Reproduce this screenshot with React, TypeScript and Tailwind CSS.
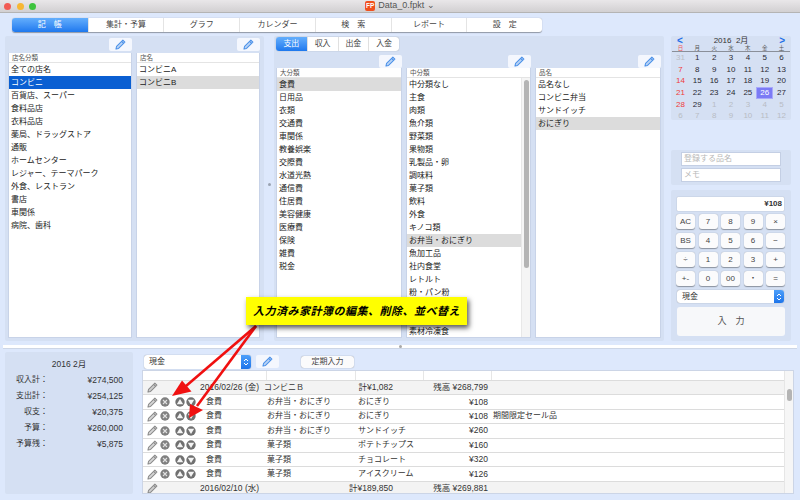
import React from 'react';

const shopGroups = ['全ての店名', 'コンビニ', '百貨店、スーパー', '食料品店', '衣料品店', '薬局、ドラッグストア', '通販', 'ホームセンター', 'レジャー、テーマパーク', '外食、レストラン', '書店', '車関係', '病院、歯科'];
const shops = ['コンビニA', 'コンビニB'];
const majors = ['食費', '日用品', '衣類', '交通費', '車関係', '教養娯楽', '交際費', '水道光熱', '通信費', '住居費', '美容健康', '医療費', '保険', '雑費', '税金'];
// two rows sit under the yellow note and can't be read
const middles = ['中分類なし', '主食', '肉類', '魚介類', '野菜類', '果物類', '乳製品・卵', '調味料', '菓子類', '飲料', '外食', 'キノコ類', 'お弁当・おにぎり', '魚加工品', '社内食堂', 'レトルト', '粉・パン粉', '', '', '素材冷凍食'];
const items = ['品名なし', 'コンビニ弁当', 'サンドイッチ', 'おにぎり'];
const tabs = ['記　帳', '集計・予算', 'グラフ', 'カレンダー', '検　索', 'レポート', '設　定'];
const days = ['日', '月', '火', '水', '木', '金', '土'];
const calc = ['AC', '7', '8', '9', '×', 'BS', '4', '5', '6', '−', '÷', '1', '2', '3', '+', '+-', '0', '00', '・', '='];
const summary = [['収入計：', '¥274,500'], ['支出計：', '¥254,125'], ['収支：', '¥20,375'], ['予算：', '¥260,000'], ['予算残：', '¥5,875']];
const entries = [
  ['食費', 'お弁当・おにぎり', 'おにぎり', '¥108', ''],
  ['食費', 'お弁当・おにぎり', 'おにぎり', '¥108', '期間限定セール品'],
  ['食費', 'お弁当・おにぎり', 'サンドイッチ', '¥260', ''],
  ['食費', '菓子類', 'ポテトチップス', '¥160', ''],
  ['食費', '菓子類', 'チョコレート', '¥320', ''],
  ['食費', '菓子類', 'アイスクリーム', '¥126', ''],
];

function PencilIcon({ color = '#4a90e8' }: { color?: string }) {
  return (
    <svg width="11" height="11" viewBox="0 0 12 12" fill="none" stroke={color} strokeWidth="1.1" strokeLinejoin="round">
      <path d="M8.6 1.2l2.2 2.2-6.9 6.9-2.9.7.7-2.9z" fill={color} fillOpacity="0.35" />
      <path d="M7.2 2.6l2.2 2.2" />
    </svg>
  );
}

function PencilButton() {
  return (
    <div className="w-[23px] h-[13px] bg-[#f4f7fe] rounded-[2px] flex items-center justify-center">
      <PencilIcon />
    </div>
  );
}

function ListBox({ title, rows, selected, selectedClass = 'bg-[#dcdcdc] text-[#222]', scroll = false }: { title: string; rows: string[]; selected: number; selectedClass?: string; scroll?: boolean }) {
  return (
    <div className="flex-1 flex flex-col bg-white border-x border-b border-[#c8d3e8] min-h-0 overflow-hidden">
      <div className="h-[10px] flex items-center pl-[3px] text-[6.5px] text-[#555] border-b border-[#e4e4e4] shrink-0">{title}</div>
      <div className="flex-1 flex min-h-0">
        <div className="flex-1 overflow-hidden">
          {rows.map((row, i) => (
            <div key={i} className={`h-[13px] flex items-center pl-[2px] text-[8px] ${i === selected ? selectedClass : 'text-[#222]'}`}>
              {row}
            </div>
          ))}
        </div>
        {scroll && (
          <div className="w-[9px] bg-[#f5f5f5] border-l border-[#e8e8e8] pt-[2px] flex justify-center">
            <div className="w-[5px] h-[188px] rounded-full bg-[#b4b4b4]" />
          </div>
        )}
      </div>
    </div>
  );
}

function ListColumn({ className, ...list }: { className: string; title: string; rows: string[]; selected: number; selectedClass?: string; scroll?: boolean }) {
  return (
    <div className={`flex flex-col ${className}`}>
      <div className="flex justify-end">
        <PencilButton />
      </div>
      <ListBox {...list} />
    </div>
  );
}

function Calendar() {
  const cells: { n: number; muted: boolean }[] = [{ n: 31, muted: true }];
  for (let n = 1; n <= 29; n++) cells.push({ n, muted: false });
  for (let n = 1; n <= 12; n++) cells.push({ n, muted: true });
  return (
    <div className="h-[84px] bg-[#d5e0f3] rounded-[2px] px-[1px] text-center">
      <div className="h-[9px] flex items-center justify-between px-[5px] text-[8px] text-[#333]">
        <span className="text-[#1f6fe8] font-bold text-[10px] leading-none">&lt;</span>
        <span className="leading-none">2016&nbsp; 2月</span>
        <span className="text-[#1f6fe8] font-bold text-[10px] leading-none">&gt;</span>
      </div>
      <div className="grid grid-cols-7 h-[7px] border-b border-[#8a8f99] text-[5.5px] leading-[6px] text-[#555]">
        {days.map((d, i) => (
          <span key={d} className={i === 0 ? 'text-[#f05050]' : ''}>{d}</span>
        ))}
      </div>
      <div className="grid grid-cols-7 auto-rows-[11.7px] text-[8px] font-medium">
        {cells.map((c, i) => {
          const today = c.n === 26 && !c.muted;
          let color = 'text-[#2a2a33]';
          if (c.muted) color = 'text-[#b8bcc4]';
          else if (i % 7 === 0) color = 'text-[#f03c3c]';
          if (today) color = 'text-white';
          return (
            <span key={i} className={`flex items-center justify-center ${color} ${today ? 'bg-[#7b7bf5] border border-[#a8a8fa]' : ''}`}>
              {c.n}
            </span>
          );
        })}
      </div>
    </div>
  );
}

function SelectBox({ className }: { className: string }) {
  return (
    <div className={`flex bg-white rounded-[3px] shadow-[0_0_1px_rgba(0,0,0,0.45)] overflow-hidden ${className}`}>
      <span className="flex-1 pl-[5px] flex items-center text-[8px] text-[#333]">現金</span>
      <span className="w-[10px] bg-gradient-to-b from-[#4d9ffa] to-[#1c74ea] flex items-center justify-center">
        <svg width="6" height="10" viewBox="0 0 6 10" fill="none" stroke="#fff" strokeWidth="1">
          <path d="M1 4l2-2 2 2M1 6l2 2 2-2" />
        </svg>
      </span>
    </div>
  );
}

function RoundIcon({ kind }: { kind: 'x' | 'up' | 'down' }) {
  return (
    <svg width="10" height="10" viewBox="0 0 10 10">
      <circle cx="5" cy="5" r="4.7" fill={kind === 'x' ? '#808080' : '#707070'} />
      {kind === 'x' && <path d="M3 3l4 4M7 3l-4 4" stroke="#e0e0e0" strokeWidth="1.1" />}
      {kind === 'up' && <path d="M5 2L8.200 7.200H1.800z" fill="#f4f4f4" />}
      {kind === 'down' && <path d="M1.800 2.800h6.400L5 8z" fill="#f4f4f4" />}
    </svg>
  );
}

function GroupRow({ date, shop, total, balance }: { date: string; shop: string; total: string; balance: string }) {
  return (
    <div className="h-[14.4px] shrink-0 flex items-center bg-[#f3f3f3] border-b border-[#dcdcdc] text-[8px] text-[#333]">
      <span className="w-[57px] pl-[4px] flex"><PencilIcon color="#8a8a8a" /></span>
      <span className="w-[64px] text-[8.5px]">{date}</span>
      <span className="w-[72px]">{shop}</span>
      <span className="w-[57px] text-right text-[8.5px]">{total}</span>
      <span className="w-[95px] text-right text-[8.5px]">{balance}</span>
    </div>
  );
}

export default function App() {
  return (
    <div className="relative w-[800px] h-[500px] overflow-hidden bg-[#dde8fc] font-['Liberation_Sans','Noto_Sans_CJK_JP',sans-serif]">
      {/* Title bar */}
      <div className="relative h-[13px] bg-gradient-to-b from-[#e9e7e9] to-[#d2d0d2] border-b border-[#b4b4b4] flex items-center justify-center">
        <div className="absolute left-[4px] top-[3px] flex gap-[5.5px]">
          <span className="w-[7px] h-[7px] rounded-full bg-[#f25c54]" />
          <span className="w-[7px] h-[7px] rounded-full bg-[#f7b733]" />
          <span className="w-[7px] h-[7px] rounded-full bg-[#3ec43e]" />
        </div>
        <span className="w-[10px] h-[10px] rounded-[2px] bg-[#f0501e] text-white text-[6.5px] font-bold leading-[10px] text-center mr-[3px]">FP</span>
        <span className="text-[9px] text-[#555]">Data_0.fpkt ⌄</span>
      </div>

      {/* Tabs */}
      <div className="ml-[12px] mt-[5px] w-[530px] h-[14px] grid grid-cols-7 bg-white rounded-[3px] shadow-[0_0.5px_1px_rgba(0,0,0,0.35)] overflow-hidden text-[8px] text-[#444]">
        {tabs.map((tab, i) => (
          <div key={tab} className={`flex items-center justify-center ${i === 0 ? 'bg-gradient-to-b from-[#63aefc] to-[#1d78ee] text-white' : 'border-l border-[#e4e4e4]'}`}>
            {tab}
          </div>
        ))}
      </div>

      {/* Upper area */}
      <div className="mt-[4px] h-[305px] flex pl-[5px]">
        <div className="w-[259px] bg-[#d5e0f3] rounded-[2px] pt-[2px] pl-[3px] pr-[4px] pb-[3px] flex gap-[4px]">
          <ListColumn className="w-[124px] gap-[2px]" title="店名分類" rows={shopGroups} selected={1} selectedClass="bg-[#0a5fd2] text-white" />
          <ListColumn className="w-[124px] gap-[2px]" title="店名" rows={shops} selected={1} />
        </div>
        <div className="w-[10px] flex items-center justify-center pb-[8px]">
          <span className="w-[3px] h-[3px] rounded-full bg-[#9aa3b2]" />
        </div>
        <div className="w-[390px] bg-[#d5e0f3] rounded-[2px] pt-[1px] pl-[2px] pb-[3px] flex flex-col">
          <div className="w-[123px] h-[14px] grid grid-cols-4 bg-white rounded-[3px] shadow-[0_0_1px_rgba(0,0,0,0.4)] overflow-hidden text-[8px] text-[#444] shrink-0">
            {['支出', '収入', '出金', '入金'].map((t, i) => (
              <span key={t} className={`flex items-center justify-center ${i === 0 ? 'bg-gradient-to-b from-[#63aefc] to-[#1d78ee] text-white' : 'border-l border-[#e0e0e0]'}`}>{t}</span>
            ))}
          </div>
          <div className="flex-1 flex gap-[4px] mt-[4px] min-h-0">
            <ListColumn className="w-[126px]" title="大分類" rows={majors} selected={0} />
            <ListColumn className="w-[125px]" title="中分類" rows={middles} selected={12} scroll />
            <ListColumn className="w-[126px]" title="品名" rows={items} selected={3} />
          </div>
        </div>
        <div className="w-[120px] ml-[7px] flex flex-col">
          <Calendar />
          <div className="mt-[30px] h-[35px] bg-[#d5e0f3] rounded-[2px] flex flex-col items-center pt-[2px] gap-[2px]">
            <div className="w-[100px] h-[14px] bg-white border border-[#c4cfe4] flex items-center pl-[2px] text-[8px] text-[#b8b8b8]">登録する品名</div>
            <div className="w-[100px] h-[14px] bg-white border border-[#c4cfe4] flex items-center pl-[2px] text-[8px] text-[#b8b8b8]">メモ</div>
          </div>
          <div className="mt-[5px] h-[151px] bg-[#d5e0f3] rounded-[2px] pt-[7px] px-[6px]">
            <div className="w-[107px] h-[14px] bg-white rounded-[1px] shadow-[0_0_1px_rgba(0,0,0,0.4)] flex items-center justify-end pr-[2px] text-[8px] font-bold text-[#333]">¥108</div>
            <div className="grid grid-cols-[repeat(5,19px)] gap-x-[3.5px] gap-y-[4px] mt-[3px] -ml-[1px]">
              {calc.map((key) => (
                <div key={key} className="h-[15px] bg-[#fbfbfc] rounded-[3px] shadow-[0_0.5px_1px_rgba(0,0,0,0.35)] flex items-center justify-center text-[8px] text-[#444]">
                  {key}
                </div>
              ))}
            </div>
            <SelectBox className="w-[107px] h-[13px] mt-[4px]" />
            <div className="w-[108px] h-[29px] mt-[4px] bg-[#f7f8fa] rounded-[3px] flex items-center justify-center text-[9px] text-[#555]">入　力</div>
          </div>
        </div>
      </div>

      {/* Divider */}
      <div className="mt-[4px] mx-[3px] h-[4px] bg-white border-b border-[#cdd6e6] flex items-center justify-center">
        <span className="w-[3px] h-[3px] rounded-full bg-[#a8a8a8]" />
      </div>

      {/* Lower area */}
      <div className="mt-[3px] h-[142px] flex pl-[5px]">
        <div className="w-[128px] bg-[#d5e0f3] rounded-[2px] pt-[8px] text-[8px] text-[#333]">
          <div className="h-[9px] leading-[9px] text-center text-[8.5px]">2016 2月</div>
          <div className="mt-[3px]">
            {summary.map(([label, value]) => (
              <div key={label} className="h-[16px] flex items-center">
                <span className="w-[43px] text-right">{label}</span>
                <span className="w-[75px] text-right text-[8.5px]">{value}</span>
              </div>
            ))}
          </div>
        </div>
        <div className="w-[652px] ml-[9px] flex flex-col">
          <div className="h-[18px] pt-[3px] flex items-start pl-[2px]">
            <SelectBox className="w-[107px] h-[14px]" />
            <div className="ml-[5px]"><PencilButton /></div>
            <div className="ml-[22px] mt-[1px] w-[53px] h-[12px] bg-[#fbfbfc] rounded-[3px] shadow-[0_0_1px_rgba(0,0,0,0.5)] flex items-center justify-center text-[8px] text-[#444]">定期入力</div>
          </div>
          <div className="flex-1 min-h-0 flex bg-white border border-[#ccd5e6] overflow-hidden">
            <div className="w-[641px] flex flex-col">
              <div className="h-[10px] shrink-0 grid grid-cols-[123px_89px_68px_68px_1fr] border-b border-[#dcdcdc]">
                <span />
                <span className="border-l border-[#e6e6e6]" />
                <span className="border-l border-[#e6e6e6]" />
                <span className="border-l border-[#e6e6e6]" />
                <span className="border-l border-[#e6e6e6]" />
              </div>
              <GroupRow date="2016/02/26 (金)" shop="コンビニＢ" total="計¥1,082" balance="残高 ¥268,799" />
              {entries.map((e, i) => (
                <div key={i} className="h-[14.4px] shrink-0 flex items-center border-b border-[#dcdcdc] text-[8px] text-[#333]">
                  <span className="w-[63px] pl-[4px] flex items-center">
                    <PencilIcon color="#8a8a8a" />
                    <span className="ml-[2px] flex"><RoundIcon kind="x" /></span>
                    <span className="ml-[5px] flex"><RoundIcon kind="up" /></span>
                    <span className="ml-[1px] flex"><RoundIcon kind="down" /></span>
                  </span>
                  <span className="w-[61px]">{e[0]}</span>
                  <span className="w-[91px]">{e[1]}</span>
                  <span className="w-[76px]">{e[2]}</span>
                  <span className="w-[54px] text-right text-[8.5px]">{e[3]}</span>
                  <span className="ml-[5px]">{e[4]}</span>
                </div>
              ))}
              <GroupRow date="2016/02/10 (水)" shop="" total="計¥189,850" balance="残高 ¥269,881" />
            </div>
            <div className="flex-1 bg-[#f6f6f6] border-l border-[#e6e6e6] flex justify-center pt-[18px]">
              <div className="w-[5px] h-[12px] rounded-full bg-[#b4b4b4]" />
            </div>
          </div>
        </div>
      </div>

      {/* Annotation */}
      <svg className="absolute left-0 top-0 pointer-events-none" width="800" height="500" viewBox="0 0 800 500" fill="none">
        <path d="M256 326L186 386" stroke="#f01010" strokeWidth="2.6" />
        <path d="M172 396l10-15.500 9.500 11z" fill="#f01010" />
        <path d="M256 326L197 406" stroke="#f01010" strokeWidth="2.6" />
        <path d="M189 418l1-14 13 6z" fill="#f01010" />
      </svg>
      <div className="absolute left-[246px] top-[297px] w-[221px] h-[28px] bg-[#ffff00] shadow-[2px_3px_5px_rgba(0,0,0,0.65)] flex items-center justify-center text-[11px] font-bold italic tracking-[0.5px] text-black">
        入力済み家計簿の編集、削除、並べ替え
      </div>
    </div>
  );
}
